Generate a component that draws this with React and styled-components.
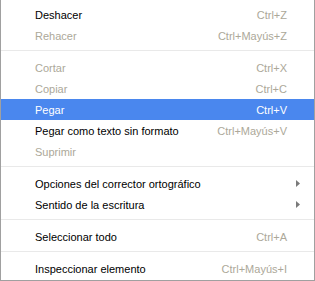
import React from 'react';
import styled, { createGlobalStyle } from 'styled-components';

const GlobalStyle = createGlobalStyle`
	html, body {
		margin: 0;
		padding: 0;
		background: #ffffff;
	}
	body {
		font-family: "Liberation Sans", Arial, sans-serif;
		font-size: 11px;
	}
`;

const items = [
	{ label: 'Deshacer', shortcut: 'Ctrl+Z' },
	{ label: 'Rehacer', shortcut: 'Ctrl+Mayús+Z', disabled: true },
	{ separator: true },
	{ label: 'Cortar', shortcut: 'Ctrl+X', disabled: true },
	{ label: 'Copiar', shortcut: 'Ctrl+C', disabled: true },
	{ label: 'Pegar', shortcut: 'Ctrl+V', active: true },
	{ label: 'Pegar como texto sin formato', shortcut: 'Ctrl+Mayús+V' },
	{ label: 'Suprimir', disabled: true },
	{ separator: true },
	{ label: 'Opciones del corrector ortográfico', submenu: true },
	{ label: 'Sentido de la escritura', submenu: true },
	{ separator: true },
	{ label: 'Seleccionar todo', shortcut: 'Ctrl+A' },
	{ separator: true },
	{ label: 'Inspeccionar elemento', shortcut: 'Ctrl+Mayús+I' },
];

const App = () => {
	return (
		<>
			<GlobalStyle />
			<Menu>
				{items.map((item, i) =>
					item.separator ? (
						<Separator key={i} />
					) : (
						<Item key={i} $active={item.active} $disabled={item.disabled}>
							<Label>{item.label}</Label>
							{item.shortcut && <Shortcut $active={item.active}>{item.shortcut}</Shortcut>}
							{item.submenu && (
								<Arrow width="4" height="7" viewBox="0 0 4 7">
									<path d="M0 0 L4 3.5 L0 7 Z" fill="#7a7a7a" />
								</Arrow>
							)}
						</Item>
					)
				)}
			</Menu>
		</>
	);
};

export default App;

const Menu = styled.div`
	box-sizing: border-box;
	width: 315px;
	height: 281px;
	padding-top: 4px;
	background: #ffffff;
	border: 1px solid #a0a0a0;
	border-top: none;
	overflow: hidden;
`;

const Item = styled.div`
	display: flex;
	align-items: center;
	height: 21px;
	padding: 0 27px 0 34px;
	background: ${(p) => (p.$active ? '#4a87ee' : 'transparent')};
	color: ${(p) => (p.$active ? '#ffffff' : p.$disabled ? '#aca899' : '#000000')};
`;

const Label = styled.span`
	flex: 1;
	white-space: nowrap;
`;

const Shortcut = styled.span`
	color: ${(p) => (p.$active ? '#ffffff' : '#aca899')};
	white-space: nowrap;
`;

const Arrow = styled.svg`
	margin-right: -13px;
	display: block;
`;

const Separator = styled.div`
	height: 1px;
	background: #e9e9e9;
	margin: 4px 0 6px;
`;
